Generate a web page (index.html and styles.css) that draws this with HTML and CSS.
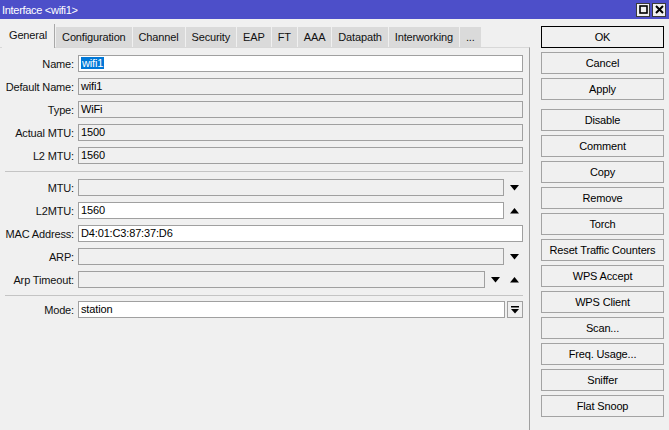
FILE: index.html
```html
<!DOCTYPE html>
<html>
  <head>
    <title>Interface &lt;wifi1&gt;</title>
    <link rel="stylesheet" href="styles.css">
  </head>
  <body>
    <div class="titlebar">
      <span class="title">Interface &lt;wifi1&gt;</span>
      <div class="winbtns">
        <span class="winbtn"><svg width="9" height="9" viewBox="0 0 9 9"><rect x="1" y="1" width="7" height="7" fill="none" stroke="#000" stroke-width="1.6"/></svg></span>
        <span class="winbtn"><svg width="9" height="9" viewBox="0 0 9 9"><path d="M1 1 L8 8 M8 1 L1 8" stroke="#000" stroke-width="2"/></svg></span>
      </div>
    </div>

    <div class="main">
      <div class="left">
        <div class="tabs">
          <span class="tab active">General</span>
          <span class="tab">Configuration</span>
          <span class="tab">Channel</span>
          <span class="tab">Security</span>
          <span class="tab">EAP</span>
          <span class="tab">FT</span>
          <span class="tab">AAA</span>
          <span class="tab">Datapath</span>
          <span class="tab">Interworking</span>
          <span class="tab">...</span>
        </div>

        <div class="panel">
          <div class="group">
            <div class="row"><span class="label">Name:</span><div class="field edit"><span class="sel">wifi1</span></div></div>
            <div class="row"><span class="label">Default Name:</span><div class="field">wifi1</div></div>
            <div class="row"><span class="label">Type:</span><div class="field">WiFi</div></div>
            <div class="row"><span class="label">Actual MTU:</span><div class="field">1500</div></div>
            <div class="row"><span class="label">L2 MTU:</span><div class="field">1560</div></div>
          </div>

          <div class="sep"></div>

          <div class="group">
            <div class="row">
              <span class="label">MTU:</span><div class="field"></div>
              <span class="spin"><svg width="9" height="6" viewBox="0 0 9 6"><polygon points="0,0 9,0 4.5,5.5" fill="#000"/></svg></span>
            </div>
            <div class="row">
              <span class="label">L2MTU:</span><div class="field edit">1560</div>
              <span class="spin"><svg width="9" height="6" viewBox="0 0 9 6"><polygon points="0,5.5 9,5.5 4.5,0" fill="#000"/></svg></span>
            </div>
            <div class="row"><span class="label">MAC Address:</span><div class="field edit">D4:01:C3:87:37:D6</div></div>
            <div class="row">
              <span class="label">ARP:</span><div class="field"></div>
              <span class="spin"><svg width="9" height="6" viewBox="0 0 9 6"><polygon points="0,0 9,0 4.5,5.5" fill="#000"/></svg></span>
            </div>
            <div class="row">
              <span class="label">Arp Timeout:</span><div class="field"></div>
              <span class="spin"><svg width="9" height="6" viewBox="0 0 9 6"><polygon points="0,0 9,0 4.5,5.5" fill="#000"/></svg></span>
              <span class="spin"><svg width="9" height="6" viewBox="0 0 9 6"><polygon points="0,5.5 9,5.5 4.5,0" fill="#000"/></svg></span>
            </div>
          </div>

          <div class="sep sep-last"></div>

          <div class="group">
            <div class="row">
              <span class="label">Mode:</span><div class="field edit">station</div>
              <span class="dropbtn"><svg width="8" height="8" viewBox="0 0 8 8"><rect x="0" y="0" width="8" height="1.5" fill="#000"/><polygon points="0,3 8,3 4,7.5" fill="#000"/></svg></span>
            </div>
          </div>
        </div>
      </div>

      <div class="side">
        <div class="btn default">OK</div>
        <div class="btn">Cancel</div>
        <div class="btn">Apply</div>
        <div class="btn spaced">Disable</div>
        <div class="btn">Comment</div>
        <div class="btn">Copy</div>
        <div class="btn">Remove</div>
        <div class="btn">Torch</div>
        <div class="btn">Reset Traffic Counters</div>
        <div class="btn">WPS Accept</div>
        <div class="btn">WPS Client</div>
        <div class="btn">Scan...</div>
        <div class="btn">Freq. Usage...</div>
        <div class="btn">Sniffer</div>
        <div class="btn">Flat Snoop</div>
      </div>
    </div>
  </body>
</html>
```

FILE: styles.css
```css
body {
    margin: 0;
    width: 669px;
    height: 430px;
    overflow: hidden;
    background: #f0f0f0;
    font-family: "Liberation Sans", Arial, sans-serif;
    font-size: 11px;
    letter-spacing: -0.15px;
    color: #000;
}
/* window caption */
.titlebar {
    height: 19px;
    background: #4d4fc9;
    display: flex;
    align-items: center;
    justify-content: space-between;
}
.title {
    color: #fff;
    padding-left: 2px;
    letter-spacing: -0.3px;
}
.winbtns {
    display: flex;
    gap: 2px;
    padding-right: 3px;
}
.winbtn {
    width: 12px;
    height: 12px;
    background: #f0f0f0;
    border: 1px solid #3a3a3a;
    display: flex;
    align-items: center;
    justify-content: center;
}
.main {
    display: flex;
    height: 411px;
}
.left {
    width: 530px;
    display: flex;
    flex-direction: column;
}
/* tabs */
.tabs {
    height: 28px;
    display: flex;
    align-items: flex-end;
    padding-left: 1px;
}
.tab {
    height: 20px;
    line-height: 20px;
    padding: 0 6px;
    background: #dadada;
    margin-left: 1px;
    color: #111;
}
.tab.active {
    height: 24px;
    line-height: 22px;
    padding: 0 7px;
    background: #f0f0f0;
    border-right: 1px solid #a8a8a8;
    margin-bottom: -1px;
    position: relative;
}
.panel {
    flex: 1;
    border-top: 1px solid #d8d8d8;
    border-right: 1px solid #a0a0a0;
    padding: 7px 6px 0 0;
}
.group {
    display: flex;
    flex-direction: column;
    gap: 6px;
}
.row {
    display: flex;
    height: 17px;
    align-items: center;
}
.label {
    width: 74px;
    margin-right: 4px;
    text-align: right;
    white-space: nowrap;
    color: #111;
}
.field {
    flex: 1;
    height: 15px;
    line-height: 15px;
    border: 1px solid #a0a0a0;
    background: #f0f0f0;
    padding-left: 2px;
    white-space: nowrap;
}
.field.edit {
    background: #fff;
}
.sel {
    background: #0078d7;
    color: #fff;
    padding: 0 1px;
}
.spin {
    width: 18px;
    display: flex;
    justify-content: center;
    align-items: center;
    padding-left: 1px;
}
.dropbtn {
    width: 14px;
    height: 15px;
    margin-left: 2px;
    border: 1px solid #a0a0a0;
    background: #f0f0f0;
    display: flex;
    justify-content: center;
    align-items: center;
}
.sep {
    height: 1px;
    background: #c4c4c4;
    margin: 7px 0 7px 5px;
}
.sep-last {
    margin-bottom: 5px;
}
/* side buttons */
.side {
    width: 123px;
    margin-left: 11px;
    padding-top: 7px;
}
.btn {
    height: 20px;
    line-height: 20px;
    border: 1px solid #a3a3a3;
    background: #f0f0f0;
    text-align: center;
    margin-bottom: 4px;
    white-space: nowrap;
}
.btn.default {
    border-color: #000;
}
.btn.spaced {
    margin-top: 9px;
}
```
